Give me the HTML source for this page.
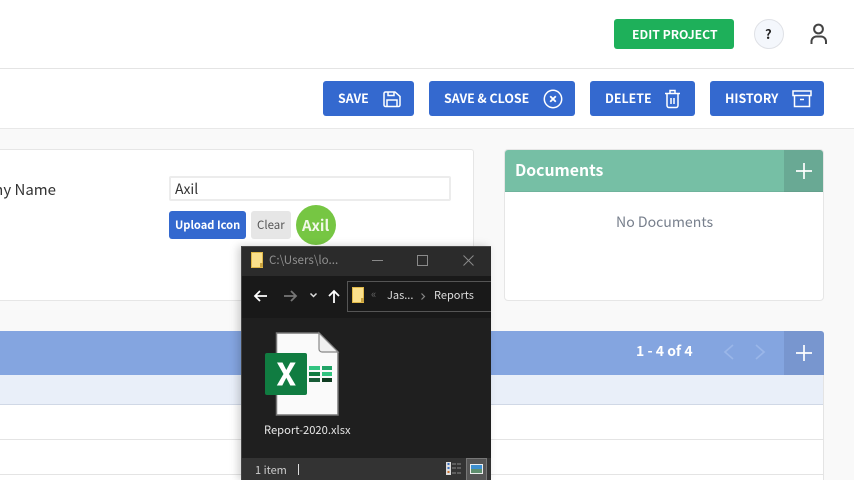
<!DOCTYPE html>
<html><head><meta charset="utf-8"><style>
html,body{margin:0;padding:0;width:854px;height:480px;overflow:hidden}
body{position:relative;background:#f9f9f9;font-family:"Noto Sans CJK JP","Liberation Sans",sans-serif}
.a{position:absolute}
.t{position:absolute;white-space:nowrap;line-height:1}
.btn{position:absolute;top:81px;height:35px;background:#3469cf;border-radius:3px}
.btn .t{color:#fff;font-weight:bold;font-size:12.400px;top:11px}
svg{position:absolute;overflow:visible}
</style></head><body>
<div class="a" style="left:0;top:0;width:854px;height:68px;background:#fff;border-bottom:1px solid #e4e4e4"></div>
<div class="a" style="left:0;top:69px;width:854px;height:59px;background:#fff;border-bottom:1px solid #e8e8e8"></div>

<div class="a" style="left:614px;top:19px;width:120px;height:30px;background:#1eb05a;border-radius:3px"></div>
<div class="t" style="left:632px;top:28px;color:#fff;font-weight:bold;font-size:12.200px">EDIT PROJECT</div>
<div class="a" style="left:754px;top:19px;width:28px;height:28px;border:1px solid #dfe1e6;border-radius:50%;background:#f4f7fc"></div>
<div class="t" style="left:765px;top:27px;color:#222;font-weight:bold;font-size:13px">?</div>
<svg style="left:808px;top:22px" width="24" height="24" fill="none" stroke="#444" stroke-width="2"><circle cx="10.500" cy="7" r="4.400"/><path d="M3.500 22v-2.500a5 5 0 0 1 5-5h4.500a5 5 0 0 1 5 5V22"/></svg>

<div class="btn" style="left:323px;width:91px"><div class="t" style="left:15px">SAVE</div>
<svg style="left:60px;top:10px" width="18" height="16" fill="none" stroke="#fff" stroke-width="1.500"><path d="M1 2.500a1.500 1.500 0 0 1 1.500-1.500h9.500l5 4.500v8.500a1.500 1.500 0 0 1-1.500 1.500H2.500a1.500 1.500 0 0 1-1.500-1.500z"/><path d="M5 1v3.500h6V1M4 15.500v-6.500h10v6.500"/></svg></div>
<div class="btn" style="left:429px;width:146px"><div class="t" style="left:15px">SAVE &amp; CLOSE</div>
<svg style="left:114px;top:8px" width="20" height="20" fill="none" stroke="#fff" stroke-width="1.500"><circle cx="10" cy="10" r="8.700"/><path d="M7.200 7.200l5.600 5.600M12.800 7.200l-5.600 5.600" stroke-width="1.800"/></svg></div>
<div class="btn" style="left:590px;width:105px"><div class="t" style="left:15px">DELETE</div>
<svg style="left:74px;top:8px" width="18" height="20" fill="none" stroke="#fff" stroke-width="1.500"><path d="M1 4.500h15M6 4V1.500h5V4M3 5v11.500a2 2 0 0 0 2 2h7a2 2 0 0 0 2-2V5M7 9v6M10 9v6"/></svg></div>
<div class="btn" style="left:710px;width:114px"><div class="t" style="left:15px">HISTORY</div>
<svg style="left:82px;top:9px" width="20" height="18" fill="none" stroke="#fff" stroke-width="1.500"><path d="M1 1h18v4.500H1zM2.500 5.500V16.500h15V5.500M8 9.500h4"/></svg></div>

<div class="a" style="left:-5px;top:149px;width:479px;height:152px;box-sizing:border-box;background:#fff;border:1px solid #e6e6e6;border-radius:3px"></div>
<div class="t" style="left:0;top:182px;width:56px;direction:rtl;overflow:hidden;font-size:15px;color:#333;height:18px">Company Name</div>
<div class="a" style="left:169px;top:176px;width:282px;height:25px;box-sizing:border-box;background:#fff;border:2px solid #ececec;border-radius:2px"></div>
<div class="t" style="left:175px;top:182px;font-size:14px;color:#333">Axil</div>
<div class="a" style="left:169px;top:211px;width:77px;height:28px;background:#3469cf;border-radius:3px"></div>
<div class="t" style="left:175px;top:220px;color:#fff;font-weight:bold;font-size:11.100px">Upload Icon</div>
<div class="a" style="left:251px;top:211px;width:40px;height:28px;background:#e6e6e6;border-radius:3px"></div>
<div class="t" style="left:257px;top:220px;color:#555;font-size:11.500px">Clear</div>
<div class="a" style="left:296px;top:205px;width:40px;height:40px;background:#76c643;border-radius:50%"></div>
<div class="t" style="left:302px;top:218px;color:#f1f8e8;font-weight:bold;font-size:15px">Axil</div>

<div class="a" style="left:504px;top:149px;width:320px;height:152px;box-sizing:border-box;background:#fff;border:1px solid #e6e6e6;border-radius:4px"></div>
<div class="a" style="left:505px;top:150px;width:279px;height:41px;background:#76bfa5;border-radius:3px 0 0 0;border-bottom:1px solid #6fb39c"></div>
<div class="a" style="left:784px;top:150px;width:39px;height:41px;background:#69a994;border-radius:0 3px 0 0;border-bottom:1px solid #64a08c"></div>
<div class="t" style="left:515px;top:162px;color:#fff;font-weight:bold;font-size:15.800px">Documents</div>
<svg style="left:796px;top:163px" width="16" height="16" stroke="#fff" stroke-width="1.700"><path d="M8 0v16M0 8h16"/></svg>
<div class="t" style="left:616px;top:215px;color:#777f8c;font-size:14.100px">No Documents</div>

<div class="a" style="left:0;top:375px;width:823px;height:105px;background:#fff;border-right:1px solid #e4e4e4"></div>
<div class="a" style="left:0;top:331px;width:784px;height:44px;background:#84a5e0"></div>
<div class="a" style="left:784px;top:331px;width:40px;height:44px;background:#7896cf;border-radius:0 3px 0 0"></div>
<div class="a" style="left:0;top:375px;width:823px;height:29px;background:#e9eff9;border-bottom:1px solid #d0d8e6"></div>
<div class="a" style="left:0;top:439px;width:823px;height:1px;background:#e4e4e4"></div>
<div class="a" style="left:0;top:474px;width:823px;height:1px;background:#e4e4e4"></div>
<div class="t" style="left:636px;top:344px;color:#fff;font-weight:bold;font-size:14px">1 - 4 of 4</div>
<svg style="left:723px;top:344px" width="44" height="16" fill="none" stroke="#9ab6e8" stroke-width="1.700"><path d="M10 1L2 8l8 7M33 1l8 7-8 7"/></svg>
<svg style="left:796px;top:345px" width="16" height="16" stroke="#fff" stroke-width="1.700"><path d="M8 0v16M0 8h16"/></svg>

<!-- window -->
<div class="a" style="left:241px;top:246px;width:250px;height:234px;background:#1f1f1f;box-shadow:-3px 0 8px rgba(0,0,0,.18)"></div>
<div class="a" style="left:241px;top:246px;width:250px;height:30px;background:#2b2b2b;border-top:1px solid #4a4a4a;box-sizing:border-box"></div>
<div class="a" style="left:241px;top:276px;width:250px;height:42px;background:#191919"></div>
<div class="a" style="left:241px;top:458px;width:250px;height:22px;background:#333"></div>
<div class="a" style="left:241px;top:246px;width:1px;height:234px;background:#444"></div>

<svg style="left:251px;top:252px" width="13" height="17"><rect x=".5" y=".5" width="11" height="15" fill="#fbe08c" stroke="#e0b848"/><rect x="9" y="11" width="3" height="4" fill="#c9a23f"/></svg>
<div class="t" style="left:269px;top:255px;color:#8f8f8f;font-size:11.600px">C:\Users\lo...</div>
<div class="a" style="left:372px;top:260px;width:11px;height:1px;background:#8a8a8a"></div>
<div class="a" style="left:417px;top:255px;width:9px;height:9px;border:1px solid #8a8a8a"></div>
<svg style="left:463px;top:255px" width="11" height="11" stroke="#8a8a8a" stroke-width="1"><path d="M.5.500l10 10M10.500.500l-10 10"/></svg>

<svg style="left:254px;top:290px" width="13" height="12" fill="none" stroke="#fff" stroke-width="1.800"><path d="M13 6H1M6 1L1 6l5 5"/></svg>
<svg style="left:284px;top:290px" width="13" height="12" fill="none" stroke="#777" stroke-width="1.800"><path d="M0 6h12M7 1l5 5-5 5"/></svg>
<svg style="left:310px;top:293px" width="7" height="5" fill="none" stroke="#ddd" stroke-width="1.500"><path d="M.5.500L3.500 3.500 6.500.500"/></svg>
<svg style="left:328px;top:290px" width="12" height="13" fill="none" stroke="#fff" stroke-width="1.800"><path d="M6 13V1M1 6l5-5 5 5"/></svg>
<div class="a" style="left:347px;top:281px;width:143px;height:29px;background:#191919;border:1px solid #555;border-right:0"></div>
<svg style="left:352px;top:287px" width="13" height="17"><rect x=".5" y=".5" width="11" height="15" fill="#fbe08c" stroke="#e0b848"/><rect x="9" y="11" width="3" height="4" fill="#c9a23f"/></svg>
<div class="t" style="left:371px;top:289px;color:#666;font-size:11px">«</div>
<div class="t" style="left:387px;top:290px;color:#ddd;font-size:11px">Jas...</div>
<svg style="left:421px;top:293px" width="5" height="7" fill="none" stroke="#888" stroke-width="1.200"><path d="M.5.500L3.500 3.500.500 6.500"/></svg>
<div class="t" style="left:434px;top:290px;color:#ddd;font-size:11px">Reports</div>

<svg style="left:265px;top:332px" width="74" height="84">
<path d="M11.500 1H54L73 20V83H11.500z" fill="#fafafa" stroke="#777" stroke-width="1.500"/>
<path d="M54 1L73 20H57a3 3 0 0 1-3-3z" fill="#f0f0f0" stroke="#888" stroke-width="1.200"/>
<rect x="0" y="21" width="42" height="42" rx="2" fill="#107c41"/>
<rect x="44" y="34" width="11" height="4" fill="#33c481"/><rect x="57" y="34" width="10" height="4" fill="#21a366"/>
<rect x="44" y="40" width="11" height="4" fill="#107c41"/><rect x="57" y="40" width="10" height="4" fill="#33c481"/>
<rect x="44" y="46" width="11" height="4" fill="#185c37"/><rect x="57" y="46" width="10" height="4" fill="#0f3d22"/>
<path d="M12 30.500h5.500L21.300 38l4-7.500h5.400L24 42l6.800 11.500h-5.500l-4-7.800-4 7.800H11.800L18.500 42z" fill="#fff"/>
</svg>
<div class="t" style="left:264px;top:425px;color:#e8e8e8;font-size:11.200px">Report-2020.xlsx</div>

<div class="t" style="left:255px;top:465px;color:#ccc;font-size:11px">1 item</div>
<div class="a" style="left:298px;top:464px;width:1px;height:11px;background:#ddd"></div>
<svg style="left:446px;top:462px" width="16" height="14"><rect width="5" height="13" fill="#ddd"/><rect x="1.500" y="1" width="2" height="2" fill="#3a6fc0"/><rect x="1.500" y="5" width="2" height="2" fill="#3a6fc0"/><rect x="1.500" y="9" width="2" height="2" fill="#c9702f"/><path d="M6 2h4M11 2h4M6 6h4M11 6h4M6 11h4M11 11h4" stroke="#888"/></svg>
<div class="a" style="left:466px;top:458px;width:19px;height:22px;background:#555;border:1px solid #777"></div>
<svg style="left:470px;top:464px" width="13" height="10"><rect width="13" height="10" fill="#eee"/><rect x="1" y="1" width="11" height="4" fill="#3d8fcf"/><rect x="1" y="5" width="11" height="4" fill="#5f8f6f"/></svg>
</body></html>
